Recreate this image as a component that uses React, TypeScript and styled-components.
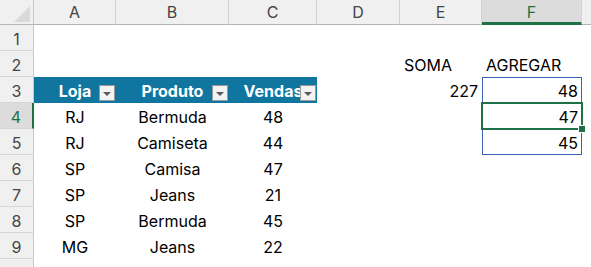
import styled, { createGlobalStyle, css } from "styled-components";

type Align = "left" | "center" | "right";

interface CellData {
  text?: string;
  align?: Align;
}

const COLUMNS = ["A", "B", "C", "D", "E", "F", "G"];
const COLUMN_WIDTHS = [82, 113, 88, 83, 82, 100, 82];
// the last column and row only peek in at the edge, so they get no label
const LABELLED_COLUMNS = 6;
const LABELLED_ROWS = 9;
const ACTIVE_COL = "F";
const ACTIVE_ROW = 4;

const TABLE_HEAD = ["Loja", "Produto", "Vendas"];

const TABLE_ROWS: [string, string, number][] = [
  ["RJ", "Bermuda", 48],
  ["RJ", "Camiseta", 44],
  ["SP", "Camisa", 47],
  ["SP", "Jeans", 21],
  ["SP", "Bermuda", 45],
  ["MG", "Jeans", 22],
];

// loose cells outside the table, keyed by "col+row"
const EXTRA_CELLS: Record<string, CellData> = {
  E2: { text: "SOMA", align: "left" },
  F2: { text: "AGREGAR", align: "left" },
  E3: { text: "227", align: "right" },
  F3: { text: "48", align: "right" },
  F4: { text: "47", align: "right" },
  F5: { text: "45", align: "right" },
};

const ROW_COUNT = 10;

const getCell = (col: string, row: number): CellData => {
  const idx = row - 4;
  if (idx >= 0 && idx < TABLE_ROWS.length) {
    if (col === "A") return { text: TABLE_ROWS[idx][0], align: "center" };
    if (col === "B") return { text: TABLE_ROWS[idx][1], align: "center" };
    if (col === "C") return { text: String(TABLE_ROWS[idx][2]), align: "center" };
  }
  return EXTRA_CELLS[`${col}${row}`] || {};
};

const FilterButton = () => (
  <S_FilterButton>
    <S_FilterArrow />
  </S_FilterButton>
);

const App = () => {
  const rows = Array.from({ length: ROW_COUNT }, (_, i) => i + 1);

  return (
    <>
      <GlobalStyle />
      <S_Sheet>
        <S_Corner>
          <S_CornerTriangle />
        </S_Corner>
        {COLUMNS.map((col, ci) => (
          <S_ColHeader key={col} $selected={col === ACTIVE_COL}>
            {ci < LABELLED_COLUMNS ? col : null}
          </S_ColHeader>
        ))}

        {rows.map((row) => (
          <S_Row key={row}>
            <S_RowHeader $selected={row === ACTIVE_ROW}>
              {row <= LABELLED_ROWS ? row : null}
            </S_RowHeader>
            {COLUMNS.map((col, ci) => {
              if (row === 3 && ci < TABLE_HEAD.length) {
                return (
                  <S_TableHead key={col}>
                    {TABLE_HEAD[ci]}
                    <FilterButton />
                  </S_TableHead>
                );
              }
              const cell = getCell(col, row);
              return (
                <S_Cell key={col} $align={cell.align || "left"}>
                  {cell.text}
                  {col === "F" && row === 3 && <S_RangeBox />}
                  {col === "F" && row === ACTIVE_ROW && (
                    <S_ActiveBox>
                      <S_FillHandle />
                    </S_ActiveBox>
                  )}
                </S_Cell>
              );
            })}
          </S_Row>
        ))}
      </S_Sheet>
    </>
  );
};

export default App;

const GlobalStyle = createGlobalStyle`
  html, body {
    margin: 0;
    padding: 0;
    background: #ffffff;
    overflow: hidden;
  }
  body {
    font-family: Inter, "Liberation Sans", sans-serif;
  }
`;

const S_Sheet = styled.div`
  display: grid;
  grid-template-columns: 34px ${COLUMN_WIDTHS.map((w) => `${w}px`).join(" ")};
  grid-template-rows: 25px repeat(${ROW_COUNT}, 26px);
  width: 591px;
  height: 267px;
  overflow: hidden;
  font-size: 16px;
  color: #000;
`;

const S_Row = styled.div`
  display: contents;
`;

const headerBase = css`
  box-sizing: border-box;
  background: #f0f0f0;
  color: #444;
  font-size: 16px;
  text-align: center;
`;

const S_Corner = styled.div`
  ${headerBase};
  display: flex;
  justify-content: flex-end;
  align-items: flex-end;
  padding: 0 3px 2px 0;
  border-right: 1px solid #c9c9c9;
  border-bottom: 1px solid #b4b4b4;
`;

const S_CornerTriangle = styled.div`
  width: 0;
  height: 0;
  border-left: 16px solid transparent;
  border-bottom: 16px solid #dadada;
`;

const S_ColHeader = styled.div<{ $selected: boolean }>`
  ${headerBase};
  line-height: 25px;
  border-right: 1px solid #d2d2d2;
  border-bottom: 1px solid #b4b4b4;
  ${({ $selected }) =>
    $selected &&
    css`
      background: #dcdcdc;
      color: #1e7145;
      border-bottom: 3px solid #1e7145;
    `}
`;

const S_RowHeader = styled.div<{ $selected: boolean }>`
  ${headerBase};
  line-height: 28px;
  overflow: hidden;
  border-right: 1px solid #c9c9c9;
  border-bottom: 1px solid #d6d6d6;
  ${({ $selected }) =>
    $selected &&
    css`
      background: #dcdcdc;
      color: #1e7145;
      border-right: 2px solid #1e7145;
    `}
`;

const S_Cell = styled.div<{ $align: Align }>`
  position: relative;
  box-sizing: border-box;
  padding: 0 4px;
  line-height: 28px;
  white-space: nowrap;
  text-align: ${({ $align }) => $align};
`;

const S_TableHead = styled.div`
  position: relative;
  overflow: hidden;
  background: #10769f;
  color: #ffffff;
  font-weight: 700;
  line-height: 28px;
  text-align: center;
  white-space: nowrap;
`;

const S_FilterButton = styled.span`
  position: absolute;
  top: 8px;
  right: 1px;
  box-sizing: border-box;
  width: 16px;
  height: 16px;
  display: flex;
  align-items: center;
  justify-content: center;
  background: #f3f3f3;
  border: 1px solid #9a9a9a;
`;

const S_FilterArrow = styled.span`
  width: 0;
  height: 0;
  margin-top: 2px;
  border-left: 4px solid transparent;
  border-right: 4px solid transparent;
  border-top: 4px solid #5a5a5a;
`;

const S_RangeBox = styled.span`
  position: absolute;
  top: 0;
  left: 0;
  box-sizing: border-box;
  width: 100px;
  height: 78px;
  border: 1px solid #3a63b8;
  pointer-events: none;
`;

const S_ActiveBox = styled.span`
  position: absolute;
  inset: -1px -1px -1px -1px;
  border: 2px solid #1e7145;
  z-index: 2;
`;

const S_FillHandle = styled.span`
  position: absolute;
  right: -5px;
  bottom: -5px;
  width: 6px;
  height: 6px;
  background: #1e7145;
  border: 1px solid #ffffff;
`;
